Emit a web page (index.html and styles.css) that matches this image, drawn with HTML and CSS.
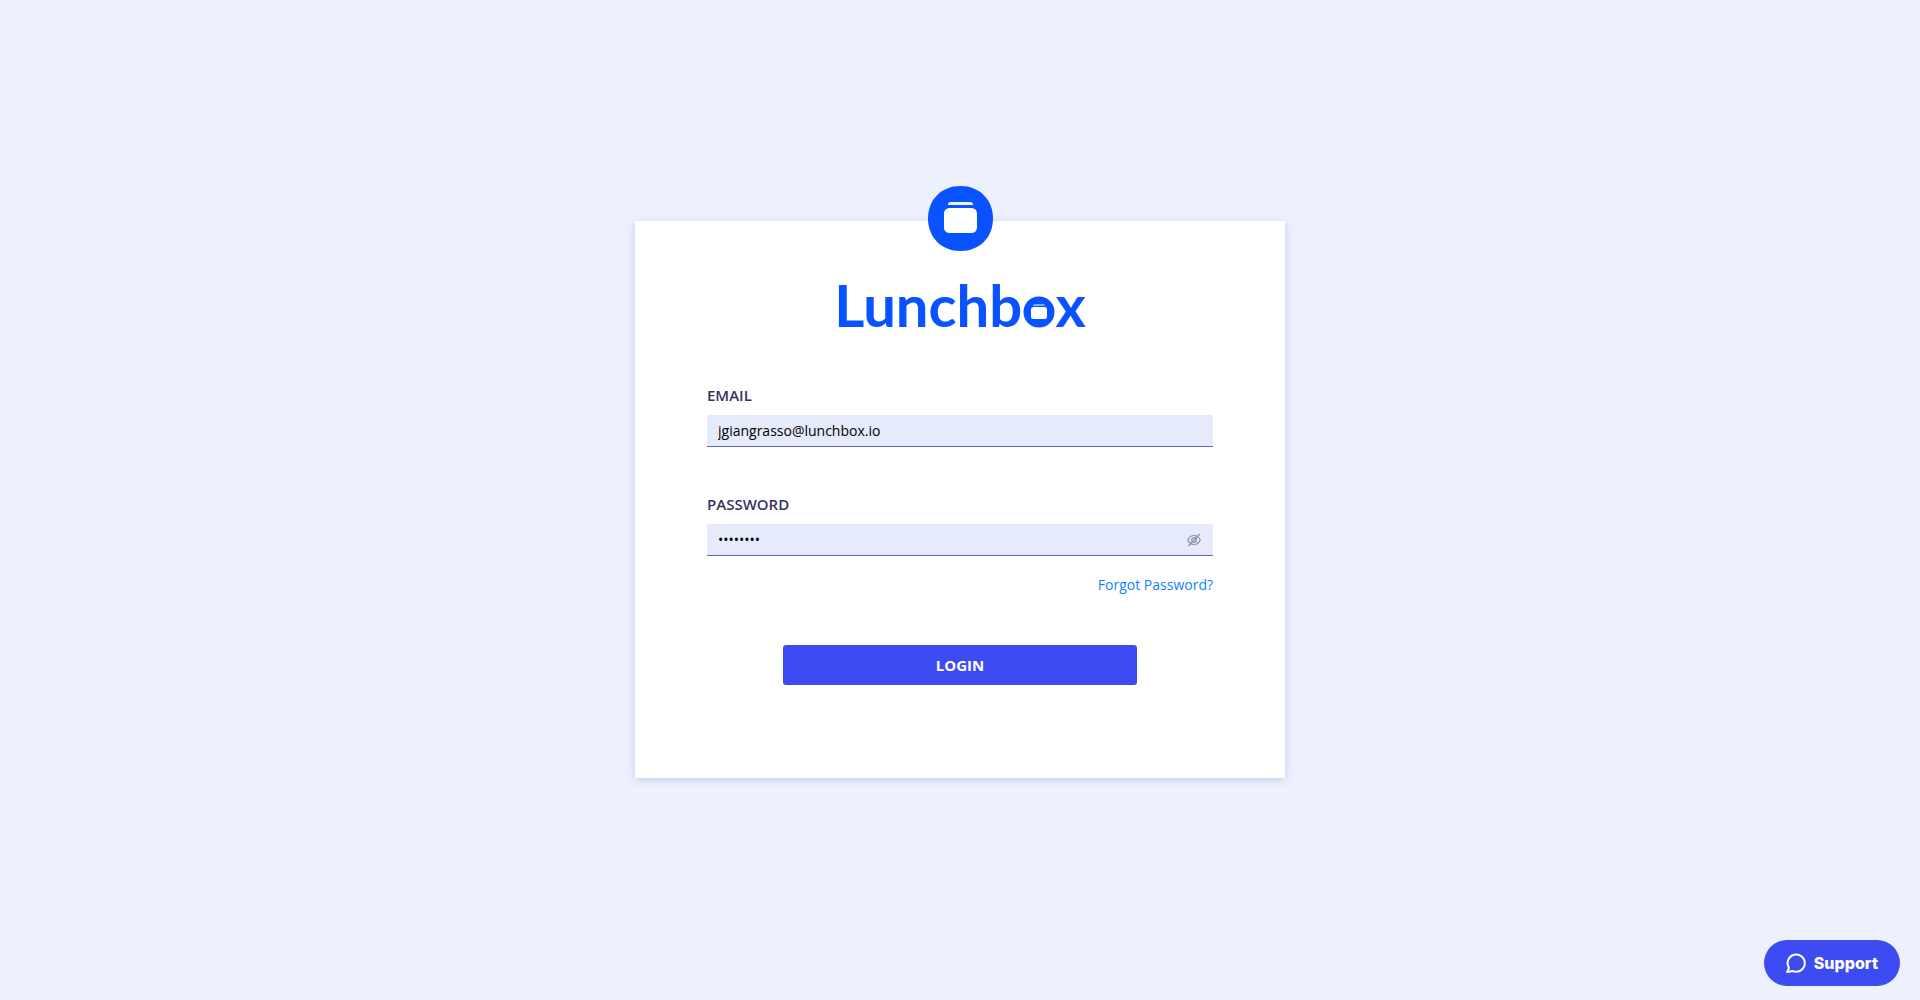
FILE: index.html
```html
<!DOCTYPE html>
<html lang="en">
<head>
<meta charset="utf-8">
<meta name="viewport" content="width=device-width, initial-scale=1">
<title>Lunchbox</title>
<link rel="stylesheet" href="styles.css">
</head>
<body>
<main class="page">
  <section class="card">
    <svg class="badge" viewBox="0 0 65 65" aria-hidden="true">
      <path class="badge-disc" d="M32.500 0C51.500 0 65 13.500 65 32.500S51.500 65 32.500 65 0 51.500 0 32.500 13.500 0 32.500 0Z"/>
      <path class="badge-lid" d="M22.500 16h20a2.500 2.500 0 0 1 2.500 3H20a2.500 2.500 0 0 1 2.500-3Z"/>
      <rect class="badge-box" x="16" y="22" width="33" height="25" rx="5.500"/>
    </svg>
    <h1 class="wordmark">Lunchb<span class="wordmark-o">o<svg class="wordmark-box" viewBox="0 0 32 32" aria-hidden="true">
      <circle class="box-disc" cx="16" cy="16" r="15.500"/>
      <path class="box-lid" d="M11 8h10l1 2H10Z"/>
      <rect class="box-body" x="8" y="11" width="16" height="12" rx="2.500"/>
    </svg></span>x</h1>
    <form class="form">
      <div class="field">
        <label class="label" for="email">EMAIL</label>
        <input class="input" id="email" type="email" value="jgiangrasso@lunchbox.io">
      </div>
      <div class="field">
        <label class="label" for="password">PASSWORD</label>
        <div class="control">
          <input class="input" id="password" type="password" value="lunchbox">
          <button class="reveal" type="button" aria-label="Show password">
            <svg class="eye" viewBox="0 0 14 14" aria-hidden="true">
              <path d="M.7 7C2 4.300 4.300 2.500 7 2.500s5 1.800 6.300 4.500C12 9.700 9.700 11.500 7 11.500S2 9.700 .7 7Z"/>
              <circle cx="7" cy="7" r="2.300"/>
              <path d="M1.500 13 12.700 1"/>
            </svg>
          </button>
        </div>
      </div>
      <a class="forgot" href="#">Forgot Password?</a>
      <button class="login" type="submit">LOGIN</button>
    </form>
  </section>
</main>
<button class="support" type="button">
  <svg class="chat" viewBox="0 0 20 20" aria-hidden="true">
    <path d="M1.200 19 3 14.800A8.600 8.600 0 1 1 7 18.100Z"/>
  </svg>
  Support
</button>
</body>
</html>
```
FILE: styles.css
```css
* {
  box-sizing: border-box;
}

body {
  margin: 0;
  background: #edf1fe;
  font-family: "Open Sans", sans-serif;
  font-size: 14px;
}

.page {
  min-height: 100vh;
  display: flex;
  justify-content: center;
  align-items: center;
  padding-bottom: 1px;
}

.card {
  position: relative;
  width: 100%;
  max-width: 650px;
  padding: 54px 72px 93px;
  background: #fff;
  box-shadow: 0 2px 8px rgba(60, 70, 130, 0.2);
}

.badge {
  position: absolute;
  top: -35px;
  left: 50%;
  width: 65px;
  height: 65px;
  margin-left: -32px;
}

.badge-disc {
  fill: #0853ff;
}

.badge-lid {
  fill: #edf1fe;
}

.badge-box {
  fill: #fff;
}

.wordmark {
  margin: 0;
  color: #0853ff;
  font-family: Lato, sans-serif;
  font-size: 58px;
  font-weight: 700;
  line-height: 60px;
  text-align: center;
}

.wordmark-o {
  position: relative;
}

.wordmark-box {
  position: absolute;
  left: 1px;
  bottom: 11px;
  width: 32px;
  height: 32px;
}

.box-disc {
  fill: #0853ff;
}

.box-lid {
  fill: #84a9ff;
}

.box-body {
  fill: #fff;
}

.form {
  display: flex;
  flex-direction: column;
  padding-top: 49px;
}

.field {
  display: flex;
  flex-direction: column;
  gap: 8px;
  margin-bottom: 46px;
}

.field:nth-of-type(2) {
  margin-bottom: 18px;
}

.label {
  color: #36345f;
  font-size: 15px;
  font-weight: 600;
  line-height: 23px;
}

.control {
  position: relative;
}

.input {
  display: block;
  width: 100%;
  height: 32px;
  padding: 0 11px;
  border: 0;
  border-bottom: 1px solid #6266ae;
  border-radius: 0;
  outline: 0;
  background: #e5ebfb;
  color: #000;
  font: inherit;
}

.reveal {
  position: absolute;
  top: 9px;
  right: 12px;
  display: flex;
  padding: 0;
  border: 0;
  background: none;
}

.eye {
  width: 14px;
  height: 14px;
  fill: none;
  stroke: #8b909f;
  stroke-width: 1.2;
}

.forgot {
  align-self: flex-end;
  color: #1380ff;
  line-height: 22px;
  text-decoration: none;
}

.login {
  align-self: center;
  width: 70%;
  height: 40px;
  margin-top: 49px;
  border: 0;
  border-radius: 3px;
  background: #3d4cf2;
  color: #fff;
  font: 700 15px "Open Sans", sans-serif;
}

.support {
  position: fixed;
  right: 20px;
  bottom: 14px;
  display: flex;
  align-items: center;
  gap: 8px;
  height: 46px;
  padding: 0 22px;
  border: 0;
  border-radius: 23px;
  background: #3d4cf2;
  color: #fff;
  font: 800 16px Inter, sans-serif;
}

.chat {
  width: 20px;
  height: 20px;
  fill: none;
  stroke: #fff;
  stroke-width: 2;
  stroke-linejoin: round;
}
```
